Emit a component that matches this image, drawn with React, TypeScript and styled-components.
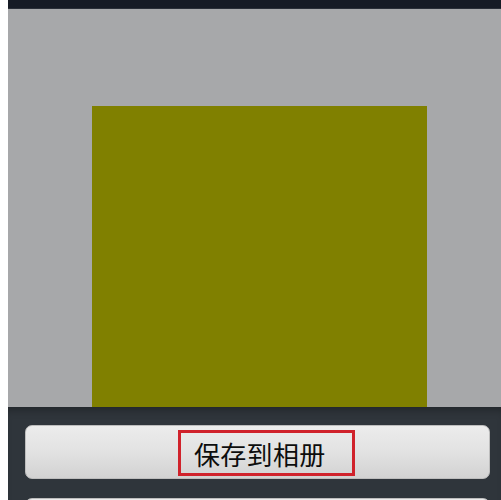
import styled, { createGlobalStyle } from 'styled-components';

const GlobalStyle = createGlobalStyle`
  html, body {
    margin: 0;
    padding: 0;
    background: #ffffff;
  }
  body {
    font-family: "Noto Sans CJK SC", "Noto Sans", sans-serif;
  }
`;

const Page = styled.div`
  display: flex;
  width: 501px;
  height: 500px;
  padding-left: 8px;
  box-sizing: border-box;
  background: #ffffff;
  overflow: hidden;
`;

const Screen = styled.div`
  flex: 1;
  display: flex;
  flex-direction: column;
  min-width: 0;
`;

const StatusBar = styled.div`
  height: 8px;
  flex-shrink: 0;
  background: #161b25;
  border-bottom: 1px solid #2a2f38;
`;

const Preview = styled.div`
  height: 398px;
  flex-shrink: 0;
  background: #a7a8aa;
  padding: 97px 0 0 84px;
  box-sizing: border-box;
  overflow: hidden;
`;

const Swatch = styled.div<{ $color: string }>`
  width: 335px;
  height: 320px;
  background: ${(p) => p.$color};
`;

const Sheet = styled.div`
  flex: 1;
  display: flex;
  flex-direction: column;
  gap: 19px;
  padding: 18px 11px 0 17px;
  background: #2f353b;
  box-shadow: inset 0 8px 10px -6px rgba(0, 0, 0, 0.35);
  overflow: hidden;
`;

const SheetButton = styled.button`
  flex-shrink: 0;
  height: 54px;
  display: flex;
  align-items: flex-end;
  padding: 0 0 2px 152px;
  border: 1px solid #bdbdbd;
  border-radius: 7px;
  background: linear-gradient(to bottom, #ececec 0%, #e2e2e2 50%, #d2d2d2 100%);
  box-sizing: border-box;
  font: inherit;
  cursor: pointer;
`;

const Highlight = styled.span`
  display: flex;
  align-items: center;
  width: 177px;
  height: 46px;
  padding-left: 13px;
  border: 3px solid #d0222b;
  box-sizing: border-box;
  font-family: "Noto Sans CJK SC", "Noto Sans", sans-serif;
  font-size: 26px;
  font-weight: 400;
  letter-spacing: 0.3px;
  color: #0d0d0d;
`;

export default function App() {
  return (
    <>
      <GlobalStyle />
      <Page>
        <Screen>
          <StatusBar />
          <Preview>
            <Swatch $color="#808000" />
          </Preview>
          <Sheet>
            <SheetButton>
              <Highlight>保存到相册</Highlight>
            </SheetButton>
            <SheetButton />
          </Sheet>
        </Screen>
      </Page>
    </>
  );
}
